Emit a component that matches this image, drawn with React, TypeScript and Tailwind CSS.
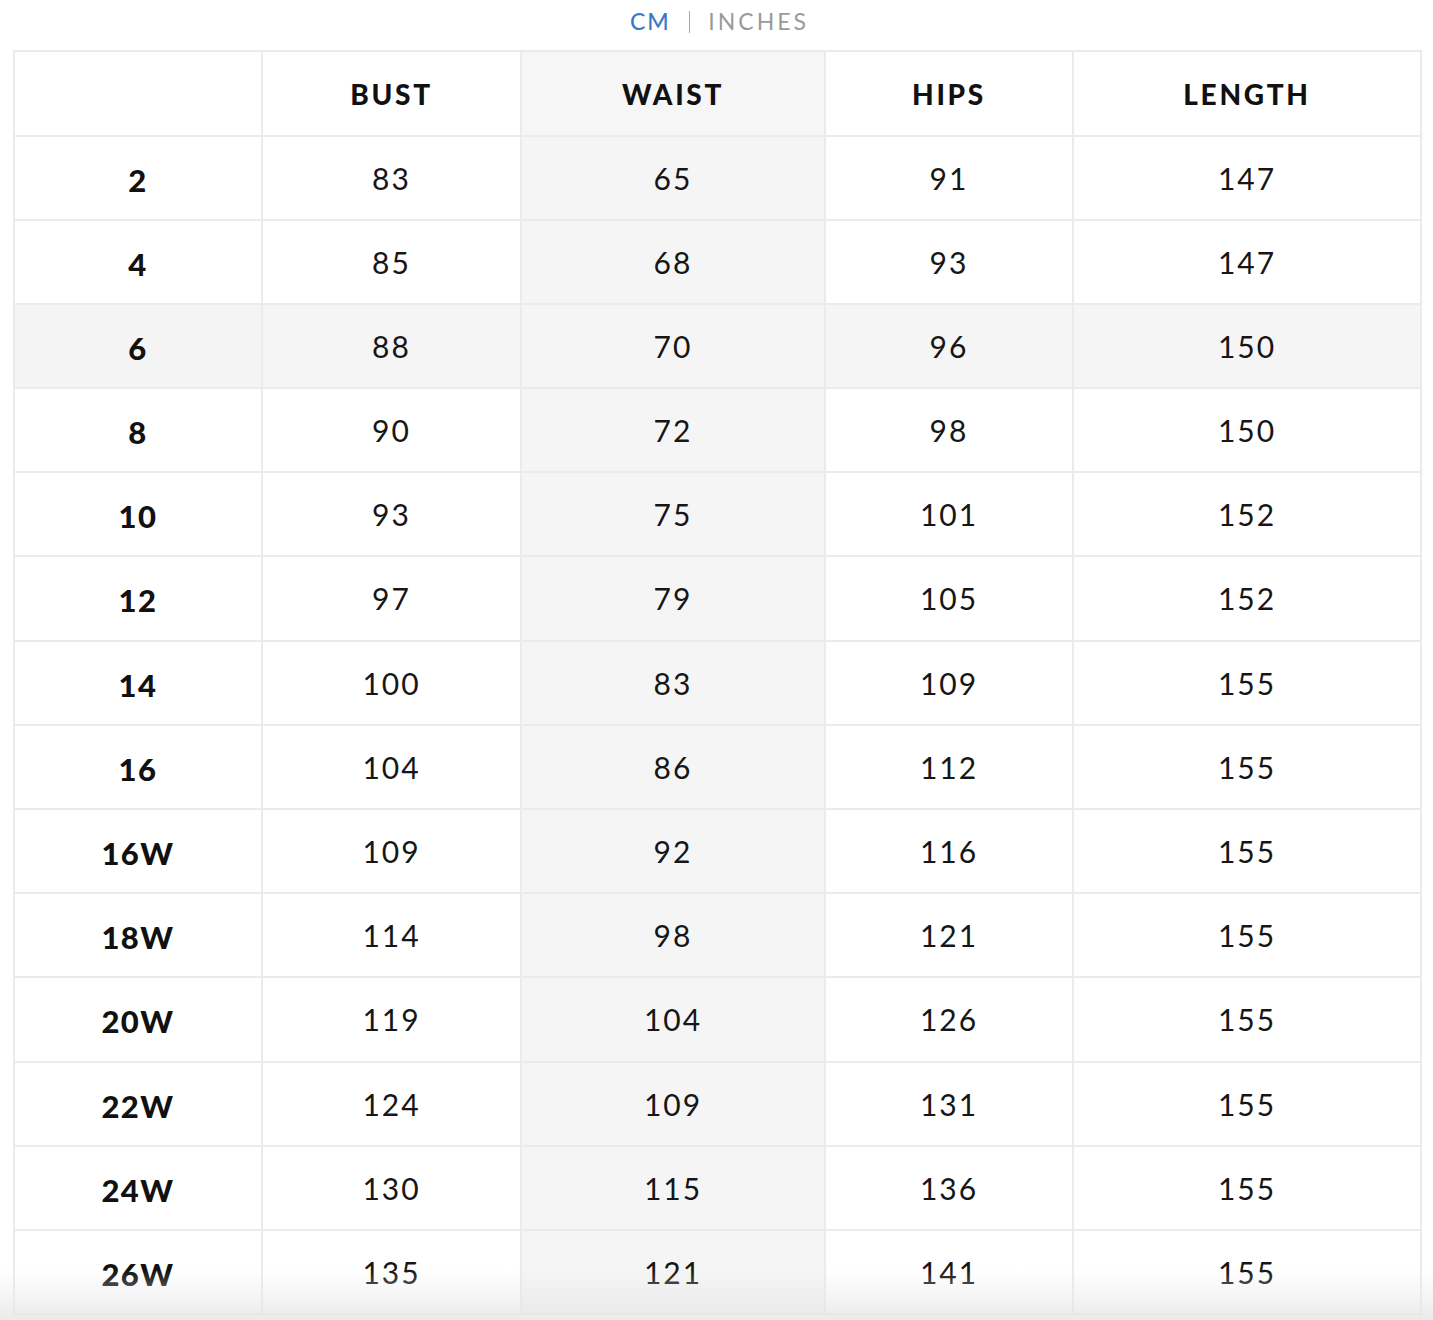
import React from "react";

const rows: [string, number, number, number, number][] = [
  ["2", 83, 65, 91, 147],
  ["4", 85, 68, 93, 147],
  ["6", 88, 70, 96, 150],
  ["8", 90, 72, 98, 150],
  ["10", 93, 75, 101, 152],
  ["12", 97, 79, 105, 152],
  ["14", 100, 83, 109, 155],
  ["16", 104, 86, 112, 155],
  ["16W", 109, 92, 116, 155],
  ["18W", 114, 98, 121, 155],
  ["20W", 119, 104, 126, 155],
  ["22W", 124, 109, 131, 155],
  ["24W", 130, 115, 136, 155],
  ["26W", 135, 121, 141, 155],
];

const font = { fontFamily: "Lato, 'Noto Sans', 'Liberation Sans', sans-serif" };

export default function App() {
  return (
    <div className="relative w-[1433px] h-[1320px] overflow-hidden bg-white" style={font}>
      <div className="flex items-center justify-center h-[42px] pt-[1px] pl-[6px]">
        <span className="text-[23px] tracking-[2px] text-[#3c78c8] font-medium">CM</span>
        <span className="mx-[18px] w-[1.5px] h-[22px] bg-[#a9a9a9]" />
        <span className="text-[23px] tracking-[3px] text-[#9a9a9a]">INCHES</span>
      </div>
      <div className="ml-[13px] mt-[8px] w-[1409px] border-l-2 border-t-2 border-[#ebebeb] grid grid-cols-[248px_259px_304px_248px_348px]">
        <div className="h-[85px] border-r-2 border-b-2 border-[#ebebeb]" />
        {["BUST", "WAIST", "HIPS", "LENGTH"].map((h) => (
          <div
            key={h}
            className={`h-[85px] border-r-2 border-b-2 border-[#ebebeb] flex items-center justify-center text-[28px] font-black tracking-[2.7px] text-[#111] ${h === "WAIST" ? "bg-[#f6f6f6]" : ""}`}
          >
            {h}
          </div>
        ))}
        {rows.map((r, i) => {
          const hl = r[0] === "6";
          const tall = i === 5 || i === 10;
          const hc = tall ? "h-[85px]" : "h-[84px]";
          return (
            <React.Fragment key={r[0]}>
              <div
                className={`${hc} border-r-2 border-b-2 border-[#ebebeb] flex items-center justify-center text-[31px] font-black tracking-[1.5px] text-[#111] pt-[4px] ${hl ? "bg-[#f4f4f4]" : ""}`}
              >
                {r[0]}
              </div>
              {r.slice(1).map((v, j) => (
                <div
                  key={j}
                  className={`${hc} border-r-2 border-b-2 border-[#ebebeb] flex items-center justify-center text-[30px] font-normal tracking-[2px] text-[#161616] ${hl || j === 1 ? "bg-[#f5f5f5]" : ""}`}
                >
                  {v}
                </div>
              ))}
            </React.Fragment>
          );
        })}
      </div>
      <div className="pointer-events-none absolute left-0 right-0 bottom-0 h-[50px] bg-gradient-to-b from-transparent to-[#e6e6e6]/80" />
    </div>
  );
}
